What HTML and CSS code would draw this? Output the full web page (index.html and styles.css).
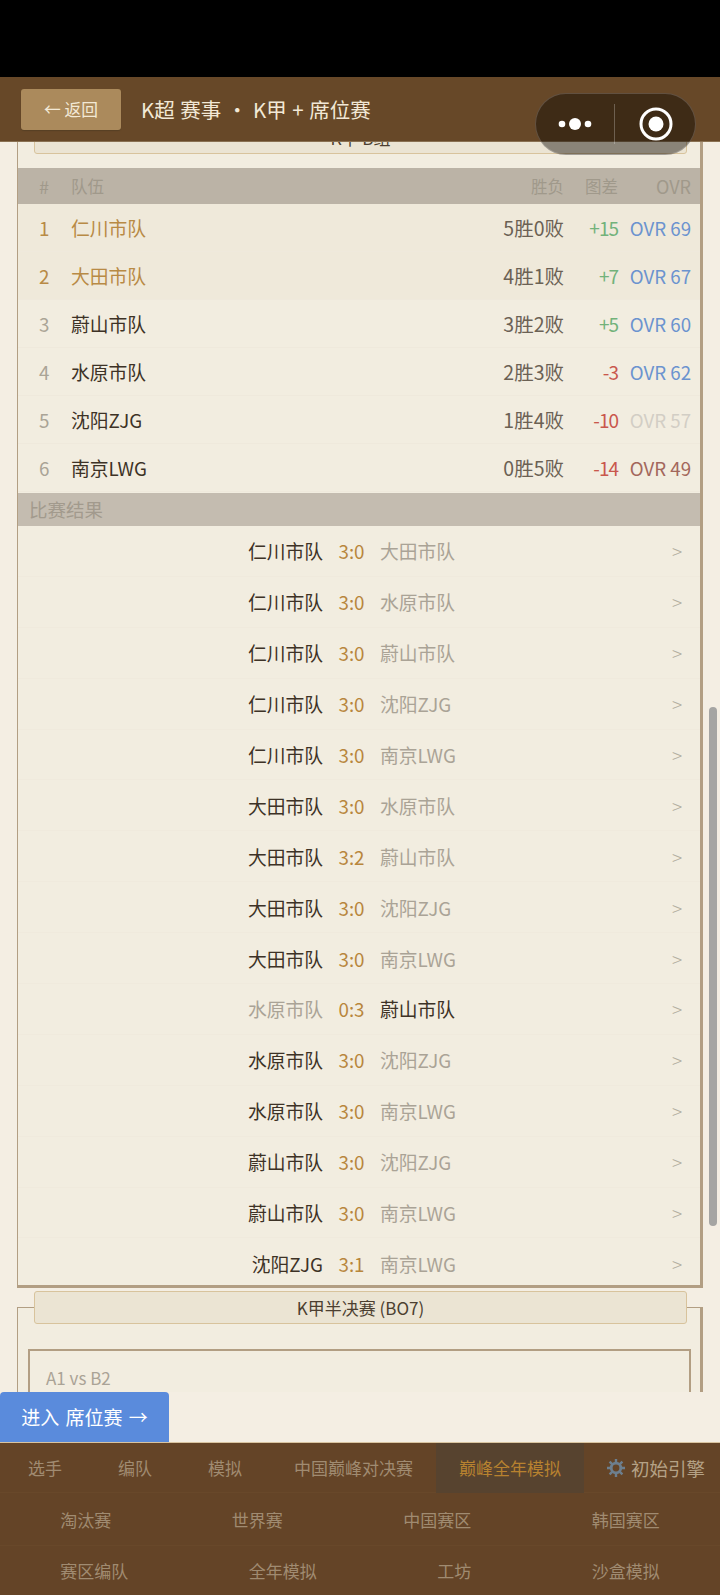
FILE: index.html
```html
<!DOCTYPE html>
<html lang="zh-CN">
<head>
<meta charset="utf-8">
<title>K甲 + 席位赛</title>
<link rel="stylesheet" href="styles.css">
</head>
<body>
<div class="status"></div>
<div class="topbar">
	<div class="back">← 返回</div>
	<div class="title">K超 赛事 · K甲 + 席位赛</div>
</div>
<div class="capsule">
	<svg class="dots" width="44" height="16" viewBox="0 0 44 16"><circle cx="9" cy="8" r="3.3" fill="#fff"/><circle cx="22" cy="8" r="6" fill="#fff"/><circle cx="35" cy="8" r="3.3" fill="#fff"/></svg>
	<span class="sep"></span>
	<svg class="target" width="36" height="36" viewBox="0 0 36 36"><circle cx="18" cy="18" r="15" fill="none" stroke="#fff" stroke-width="3"/><circle cx="18" cy="18" r="7.5" fill="#fff"/></svg>
</div>

<div class="scroll">
	<div class="legend first">K甲 B组</div>
	<div class="panel">
		<div class="thead">
			<span class="c-no">#</span><span class="c-team">队伍</span><span class="c-rec">胜负</span><span class="c-diff">图差</span><span class="c-ovr">OVR</span>
		</div>
		<div class="trow hl"><span class="c-no">1</span><span class="c-team">仁川市队</span><span class="c-rec">5胜0败</span><span class="c-diff up">+15</span><span class="c-ovr blue">OVR 69</span></div>
		<div class="trow hl"><span class="c-no">2</span><span class="c-team">大田市队</span><span class="c-rec">4胜1败</span><span class="c-diff up">+7</span><span class="c-ovr blue">OVR 67</span></div>
		<div class="trow"><span class="c-no">3</span><span class="c-team">蔚山市队</span><span class="c-rec">3胜2败</span><span class="c-diff up">+5</span><span class="c-ovr blue">OVR 60</span></div>
		<div class="trow"><span class="c-no">4</span><span class="c-team">水原市队</span><span class="c-rec">2胜3败</span><span class="c-diff down">-3</span><span class="c-ovr blue">OVR 62</span></div>
		<div class="trow"><span class="c-no">5</span><span class="c-team">沈阳ZJG</span><span class="c-rec">1胜4败</span><span class="c-diff down">-10</span><span class="c-ovr pale">OVR 57</span></div>
		<div class="trow"><span class="c-no">6</span><span class="c-team">南京LWG</span><span class="c-rec">0胜5败</span><span class="c-diff down">-14</span><span class="c-ovr red">OVR 49</span></div>
		<div class="section">比赛结果</div>
		<div class="match"><span class="home">仁川市队</span><span class="score">3:0</span><span class="away">大田市队</span><span class="go">&gt;</span></div>
		<div class="match"><span class="home">仁川市队</span><span class="score">3:0</span><span class="away">水原市队</span><span class="go">&gt;</span></div>
		<div class="match"><span class="home">仁川市队</span><span class="score">3:0</span><span class="away">蔚山市队</span><span class="go">&gt;</span></div>
		<div class="match"><span class="home">仁川市队</span><span class="score">3:0</span><span class="away">沈阳ZJG</span><span class="go">&gt;</span></div>
		<div class="match"><span class="home">仁川市队</span><span class="score">3:0</span><span class="away">南京LWG</span><span class="go">&gt;</span></div>
		<div class="match"><span class="home">大田市队</span><span class="score">3:0</span><span class="away">水原市队</span><span class="go">&gt;</span></div>
		<div class="match"><span class="home">大田市队</span><span class="score">3:2</span><span class="away">蔚山市队</span><span class="go">&gt;</span></div>
		<div class="match"><span class="home">大田市队</span><span class="score">3:0</span><span class="away">沈阳ZJG</span><span class="go">&gt;</span></div>
		<div class="match"><span class="home">大田市队</span><span class="score">3:0</span><span class="away">南京LWG</span><span class="go">&gt;</span></div>
		<div class="match lost"><span class="home">水原市队</span><span class="score">0:3</span><span class="away">蔚山市队</span><span class="go">&gt;</span></div>
		<div class="match"><span class="home">水原市队</span><span class="score">3:0</span><span class="away">沈阳ZJG</span><span class="go">&gt;</span></div>
		<div class="match"><span class="home">水原市队</span><span class="score">3:0</span><span class="away">南京LWG</span><span class="go">&gt;</span></div>
		<div class="match"><span class="home">蔚山市队</span><span class="score">3:0</span><span class="away">沈阳ZJG</span><span class="go">&gt;</span></div>
		<div class="match"><span class="home">蔚山市队</span><span class="score">3:0</span><span class="away">南京LWG</span><span class="go">&gt;</span></div>
		<div class="match last"><span class="home">沈阳ZJG</span><span class="score">3:1</span><span class="away">南京LWG</span><span class="go">&gt;</span></div>
	</div>
	<div class="legend second">K甲半决赛 (BO7)</div>
	<div class="panel next">
		<div class="series">A1 vs B2</div>
	</div>
	<div class="thumb"></div>
</div>

<div class="enter-bar"><div class="enter">进入 席位赛 →</div></div>

<div class="nav">
	<div class="nav-row tabs">
		<span class="tab">选手</span>
		<span class="tab">编队</span>
		<span class="tab">模拟</span>
		<span class="tab wide">中国巅峰对决赛</span>
		<span class="tab active">巅峰全年模拟</span>
		<span class="tab engine">
			<svg width="20" height="20" viewBox="0 0 20 20"><g stroke="#6d7f8e" stroke-width="2.4"><path d="M10 1v18M1 10h18M3.6 3.6l12.8 12.8M16.4 3.6L3.6 16.4"/></g><circle cx="10" cy="10" r="6.2" fill="#6d7f8e"/><circle cx="10" cy="10" r="3.4" fill="#644427"/></svg>
			初始引擎
		</span>
	</div>
	<div class="nav-row">
		<span>淘汰赛</span><span>世界赛</span><span>中国赛区</span><span>韩国赛区</span>
	</div>
	<div class="nav-row">
		<span>赛区编队</span><span>全年模拟</span><span>工坊</span><span>沙盒模拟</span>
	</div>
</div>
</body>
</html>
```
FILE: styles.css
```css
* {
box-sizing:border-box;
}
html, body {
margin:0;
padding:0;
}
body {
position:relative;
width:720px;
height:1595px;
overflow:hidden;
display:flex;
flex-direction:column;
background-color:#f4eee3;
font-family:"Noto Sans CJK SC","Noto Sans",sans-serif;
font-size:18.8px;
color:#3d3226;
}
.status {
height:77px;
flex:none;
background-color:#000;
}
.topbar {
height:64px;
flex:none;
display:flex;
align-items:flex-start;
padding:12px 0 0 21px;
background-color:#674828;
position:relative;
z-index:2;
box-shadow:0 1px 0 #8a7152;
}
.back {
width:100px;
height:41px;
line-height:41px;
text-align:center;
border-radius:3px;
background-color:#ab8a5c;
color:#f3e9d6;
font-size:16.8px;
box-shadow:0 1px 1px #574024;
}
.title {
margin-left:20px;
line-height:41px;
color:#f2e8d6;
font-size:20.5px;
word-spacing:1px;
}
.capsule {
position:absolute;
left:535px;
top:93px;
width:161px;
height:62px;
z-index:3;
display:flex;
align-items:center;
border-radius:31px;
border:1.5px solid rgba(255,255,255,.18);
background-color:rgba(9,5,0,.43);
}
.dots {
margin-left:17px;
}
.sep {
width:1px;
height:40px;
margin-left:17px;
background-color:rgba(255,255,255,.25);
}
.target {
margin-left:23px;
}
.scroll {
position:relative;
height:1271px;
flex:none;
overflow:hidden;
margin-top:-20px;
}
.legend {
position:relative;
z-index:1;
margin:0 33px 0 34px;
height:33px;
line-height:31px;
text-align:center;
border:1px solid #d8c39c;
border-radius:3px;
background-color:#ebe4d3;
font-size:17px;
color:#4c3f30;
}
.legend.second {
margin-top:3px;
}
.panel {
margin:-17px 17px 0;
padding-top:30px;
background-color:#f2ede0;
border:1.5px solid #b29e83;
border-right-width:3px;
border-bottom-width:3px;
}
.thead, .trow {
display:flex;
align-items:center;
padding:0 9px 0 21px;
}
.thead {
height:36px;
background-color:#bbb3a6;
color:#a0998b;
font-size:16.5px;
}
.trow {
height:48px;
border-bottom:1px solid #efe9dc;
}
.trow.hl {
background-color:#efe9da;
}
.trow.hl .c-team, .trow.hl .c-no {
color:#b88a45;
}
.c-no {
width:32px;
color:#aaa496;
}
.c-team {
flex:1;
}
.c-rec {
width:70px;
text-align:right;
white-space:nowrap;
color:#6b6154;
font-size:19.5px;
}
.thead .c-rec, .thead .c-team, .thead .c-diff {
color:#a0998b;
font-size:16.5px;
}
.thead .c-no, .thead .c-ovr {
color:#a0998b;
font-size:18px;
}
.c-diff {
width:54px;
text-align:right;
font-size:19px;
letter-spacing:-1px;
}
.thead .c-diff {
letter-spacing:0;
}
.c-ovr {
width:73px;
text-align:right;
white-space:nowrap;
font-size:18.7px;
}
.up {
color:#72b27a;
}
.down {
color:#c9574c;
}
.blue {
color:#6b93cf;
}
.pale {
color:#d2cec5;
}
.red {
color:#a3675c;
}
.section {
height:33px;
line-height:33px;
margin-top:1px;
padding-left:11px;
background-color:#c4bcb0;
color:#a29a8d;
font-size:18.5px;
}
.match {
display:flex;
align-items:center;
height:50.9px;
border-bottom:1px solid #f0eadd;
}
.match.last {
height:47px;
padding-top:4px;
border-bottom:0;
}
.home {
width:305px;
text-align:right;
}
.score {
width:57px;
text-align:center;
color:#b8863c;
}
.away {
flex:1;
color:#aaa396;
}
.go {
width:28px;
color:#b3ad9f;
font-size:19px;
font-weight:300;
}
.match.lost .home {
color:#aaa396;
}
.match.lost .away {
color:#3d3226;
}
.next {
height:200px;
padding:41px 9px 0 10px;
border-bottom:0;
}
.series {
height:170px;
padding:14px 16px;
border:2px solid #b29e83;
color:#aaa396;
font-size:17px;
}
.thumb {
position:absolute;
right:3px;
top:586px;
width:8px;
height:519px;
border-radius:4px;
background-color:#a5a5a3;
}
.enter-bar {
height:50px;
flex:none;
}
.enter {
width:169px;
height:50px;
line-height:50px;
text-align:center;
border-radius:4px 4px 0 0;
background-color:#5a8bdc;
color:#fff;
font-size:19px;
word-spacing:2px;
}
.nav {
flex:1;
background-color:#644427;
border-top:1px solid #d9c4a0;
color:#a08b71;
font-size:17px;
}
.nav-row {
display:flex;
align-items:center;
justify-content:space-around;
height:53px;
border-bottom:1px solid #68482a;
}
.nav-row.tabs {
justify-content:flex-start;
height:50px;
}
.nav-row:last-child {
height:49px;
border-bottom:0;
}
.tab {
padding:0 28px;
line-height:50px;
white-space:nowrap;
}
.tab.wide {
padding:0 23px 0 24px;
}
.tab.active {
padding:0 23px;
background-color:#57432f;
color:#b8822f;
}
.tab.engine {
display:flex;
align-items:center;
gap:5px;
padding:0 0 0 22px;
font-size:18.5px;
color:#b5a286;
}
```
